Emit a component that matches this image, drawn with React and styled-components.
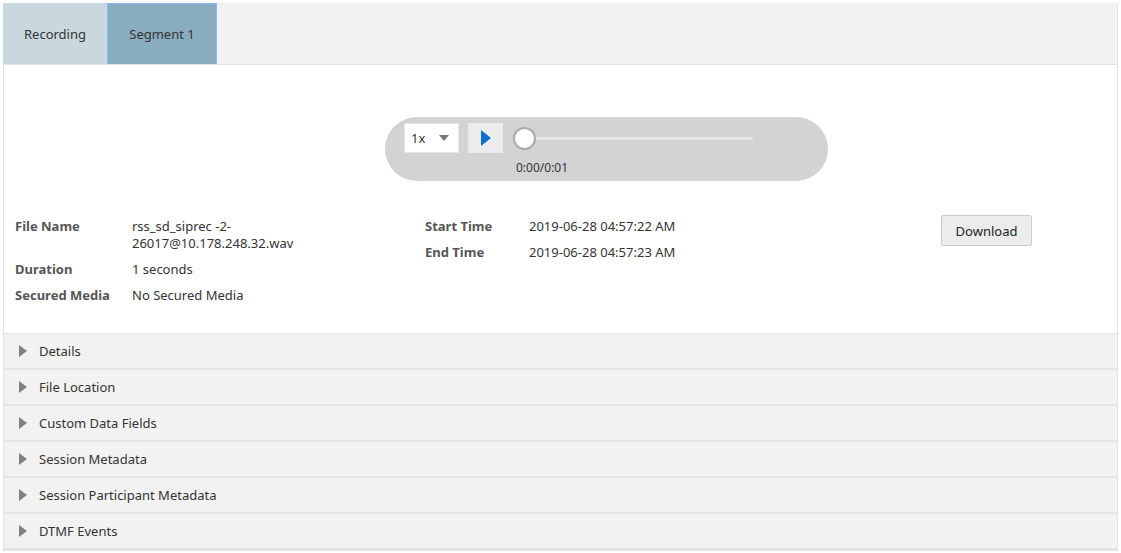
import React, { useState } from "react";
import styled, { createGlobalStyle } from "styled-components";

const GlobalStyle = createGlobalStyle`
  html, body { margin: 0; padding: 0; background: #fff; }
  body {
    font-family: "Segoe UI", "Noto Sans", "Open Sans", sans-serif;
    font-size: 13px;
    color: #333;
  }
`;

const Page = styled.div`
  padding: 3px 3px 3px 3px;
`;

const Frame = styled.div`
  border: 1px solid #e3e3e3;
  border-top: none;
  width: 1113px;
`;

const TabBar = styled.div`
  display: flex;
  height: 61px;
  background: #f2f2f2;
  border-bottom: 1px solid #e3e3e3;
  margin-left: -1px;
`;

const Tab = styled.div`
  display: flex;
  align-items: center;
  justify-content: center;
  width: ${p => (p.active ? "110px" : "104px")};
  background: ${p => (p.active ? "#8aacbf" : "#c9d8df")};
  border: 1px solid ${p => (p.active ? "#8db4f5" : "transparent")};
  border-bottom: none;
  box-sizing: border-box;
  color: #333;
  cursor: pointer;
`;

const Body = styled.div`
  background: #fff;
  padding-top: 52px;
`;

const PlayerRow = styled.div`
  display: flex;
  padding-left: 381px;
`;

const Player = styled.div`
  width: 443px;
  height: 64px;
  background: #d3d3d3;
  border-radius: 32px;
  box-sizing: border-box;
  padding: 6px 0 0 19px;
`;

const Controls = styled.div`
  display: flex;
  align-items: center;
  gap: 9px;
`;

const Speed = styled.div`
  width: 55px;
  height: 30px;
  background: #fff;
  border: 1px solid #e6e6e6;
  box-sizing: border-box;
  display: flex;
  align-items: center;
  justify-content: space-between;
  padding: 0 9px 0 6px;
  color: #333;
`;

const Caret = styled.span`
  width: 0;
  height: 0;
  border-left: 5px solid transparent;
  border-right: 5px solid transparent;
  border-top: 6px solid #777;
`;

const PlayButton = styled.button`
  width: 35px;
  height: 30px;
  background: #ececec;
  border: none;
  padding: 0;
  display: flex;
  align-items: center;
  justify-content: center;
  cursor: pointer;
`;

const Track = styled.div`
  position: relative;
  width: 240px;
  height: 22px;
  display: flex;
  align-items: center;
  margin-left: 1px;
`;

const Rail = styled.div`
  margin-left: 11px;
  width: 229px;
  height: 3px;
  background: #e6e6e6;
`;

const Thumb = styled.div`
  position: absolute;
  left: 0;
  top: 0;
  width: 23px;
  height: 23px;
  box-sizing: border-box;
  border-radius: 50%;
  background: #fff;
  border: 2px solid #aaa;
`;

const Time = styled.div`
  margin: 6px 0 0 112px;
  font-size: 12px;
  color: #333;
`;

const Info = styled.div`
  display: flex;
  padding: 37px 0 29px 11px;
`;

const Fields = styled.div`
  display: grid;
  grid-template-columns: ${p => p.cols};
  row-gap: ${p => p.gap};
  align-content: start;
  width: ${p => p.w};
`;

const Label = styled.div`
  font-weight: 700;
  color: #555;
  line-height: 17px;
`;

const Value = styled.div`
  color: #333;
  line-height: 17px;
  max-width: 180px;
`;

const DownloadWrap = styled.div`
  margin-top: -3px;
`;

const DownloadButton = styled.button`
  width: 91px;
  height: 31px;
  background: #ececec;
  border: 1px solid #ccc;
  border-radius: 2px;
  font: inherit;
  color: #222;
  cursor: pointer;
`;

const Sections = styled.div`
  background: #e5e5e5;
  display: flex;
  flex-direction: column;
  gap: 2px;
  padding: 0 0 2px 0;
  border-top: 1px solid #e5e5e5;
`;

const SectionRow = styled.div`
  display: flex;
  align-items: center;
  height: 34px;
  background: #f2f2f2;
  padding-left: 15px;
  gap: 12px;
  cursor: pointer;
`;

const Arrow = styled.span`
  width: 0;
  height: 0;
  border-top: 6px solid transparent;
  border-bottom: 6px solid transparent;
  border-left: 8px solid #7f7f7f;
`;

const sections = [
  "Details",
  "File Location",
  "Custom Data Fields",
  "Session Metadata",
  "Session Participant Metadata",
  "DTMF Events",
];

export default function App() {
  const [tab, setTab] = useState(1);
  return (
    <Page>
      <GlobalStyle />
      <Frame>
        <TabBar>
          <Tab active={tab === 0} onClick={() => setTab(0)}>Recording</Tab>
          <Tab active={tab === 1} onClick={() => setTab(1)}>Segment 1</Tab>
        </TabBar>
        <Body>
          <PlayerRow>
            <Player>
              <Controls>
                <Speed>
                  1x
                  <Caret />
                </Speed>
                <PlayButton>
                  <svg width="12" height="16" viewBox="0 0 12 16">
                    <path d="M1 0 L11 8 L1 16 Z" fill="#0b6fd6" />
                  </svg>
                </PlayButton>
                <Track>
                  <Rail />
                  <Thumb />
                </Track>
              </Controls>
              <Time>0:00/0:01</Time>
            </Player>
          </PlayerRow>
          <Info>
            <Fields cols="117px 1fr" gap="9px" w="410px">
              <Label>File Name</Label>
              <Value>rss_sd_siprec -2-26017@10.178.248.32.wav</Value>
              <Label>Duration</Label>
              <Value>1 seconds</Value>
              <Label>Secured Media</Label>
              <Value>No Secured Media</Value>
            </Fields>
            <Fields cols="104px 1fr" gap="9px" w="516px">
              <Label>Start Time</Label>
              <Value>2019-06-28 04:57:22 AM</Value>
              <Label>End Time</Label>
              <Value>2019-06-28 04:57:23 AM</Value>
            </Fields>
            <DownloadWrap>
              <DownloadButton>Download</DownloadButton>
            </DownloadWrap>
          </Info>
        </Body>
        <Sections>
          {sections.map(s => (
            <SectionRow key={s}>
              <Arrow />
              {s}
            </SectionRow>
          ))}
        </Sections>
      </Frame>
    </Page>
  );
}
